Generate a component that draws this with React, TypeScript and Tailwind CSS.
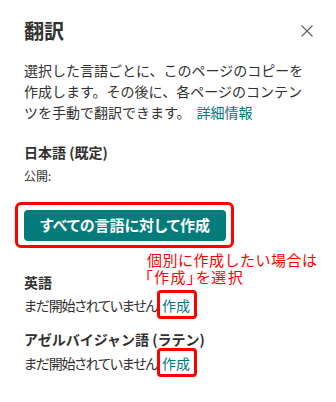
import React from 'react';

const font = "font-['Segoe_UI','Noto_Sans_CJK_JP',sans-serif]";

function CloseIcon() {
  return (
    <svg width="12" height="12" viewBox="0 0 12 12" aria-hidden="true">
      <path d="M0.5 0.5 L11.5 11.5 M11.5 0.5 L0.5 11.5" stroke="#5f5d70" strokeWidth="1.1" fill="none" />
    </svg>
  );
}

function LanguageRow({ name, className, statusGap }: { name: string; className: string; statusGap: string }) {
  return (
    <div className={className}>
      <div className="text-[14px] font-bold leading-[20px] text-[#323130]">{name}</div>
      <div className={`${statusGap} flex items-center text-[14px] leading-[20px] text-[#323130]`}>
        <span className="tracking-[-1.2px] [font-feature-settings:'palt']">まだ開始されていません</span>
        <span className="relative ml-[5px] text-[#03787c]">
          作成
          <span className="pointer-events-none absolute -left-[5px] -right-[7px] -top-[5px] -bottom-[4px] rounded-[4px] border-[3px] border-[#ff0000]" />
        </span>
      </div>
    </div>
  );
}

export default function App() {
  return (
    <div className={`relative h-[402px] w-[336px] overflow-hidden bg-white px-6 pt-[17px] ${font}`}>
      <header className="flex h-[28px] items-center justify-between">
        <h1 className="text-[20px] font-bold leading-[28px] text-[#323130]">翻訳</h1>
        <button aria-label="閉じる" className="mr-[-3px] flex h-[28px] w-[16px] items-center justify-center">
          <CloseIcon />
        </button>
      </header>

      <p className="mt-[15px] w-[288px] text-[14px] leading-[21px] text-[#323130]">
        選択した言語ごとに、このページのコピーを作成します。その後に、各ページのコンテンツを手動で翻訳できます。
        <span className="ml-[6px] text-[#03787c]">詳細情報</span>
      </p>

      <div className="mt-[19px] text-[14px] font-bold leading-[20px] text-[#323130]">日本語 (既定)</div>
      <div className="mt-[6px] text-[12px] leading-[16px] text-[#323130]">公開:</div>

      <div className="relative mt-[26px] w-[202px]">
        <button className="flex h-[31px] w-[202px] items-center justify-center rounded-[4px] bg-[#037c7b] text-[15px] font-bold text-white [font-feature-settings:'palt']">
          すべての言語に対して作成
        </button>
        <span className="pointer-events-none absolute -left-[9px] -right-[8px] -top-[8px] -bottom-[7px] rounded-[6px] border-[3px] border-[#ff0000]" />
      </div>

      <LanguageRow name="英語" className="mt-[31px]" statusGap="mt-[3px]" />
      <LanguageRow name="アゼルバイジャン語 (ラテン)" className="mt-[14px]" statusGap="mt-[4px]" />

      <div className="absolute left-[147px] top-[251px] text-[15px] leading-[17px] text-[#ff0000] [text-shadow:0_0_2px_#fff,0_0_2px_#fff,0_0_3px_#fff]">
        <div className="tracking-[0.5px]">個別に作成したい場合は</div>
        <div className="-ml-[2px] tracking-[1.5px] [font-feature-settings:'palt']">「作成」を選択</div>
      </div>
    </div>
  );
}
